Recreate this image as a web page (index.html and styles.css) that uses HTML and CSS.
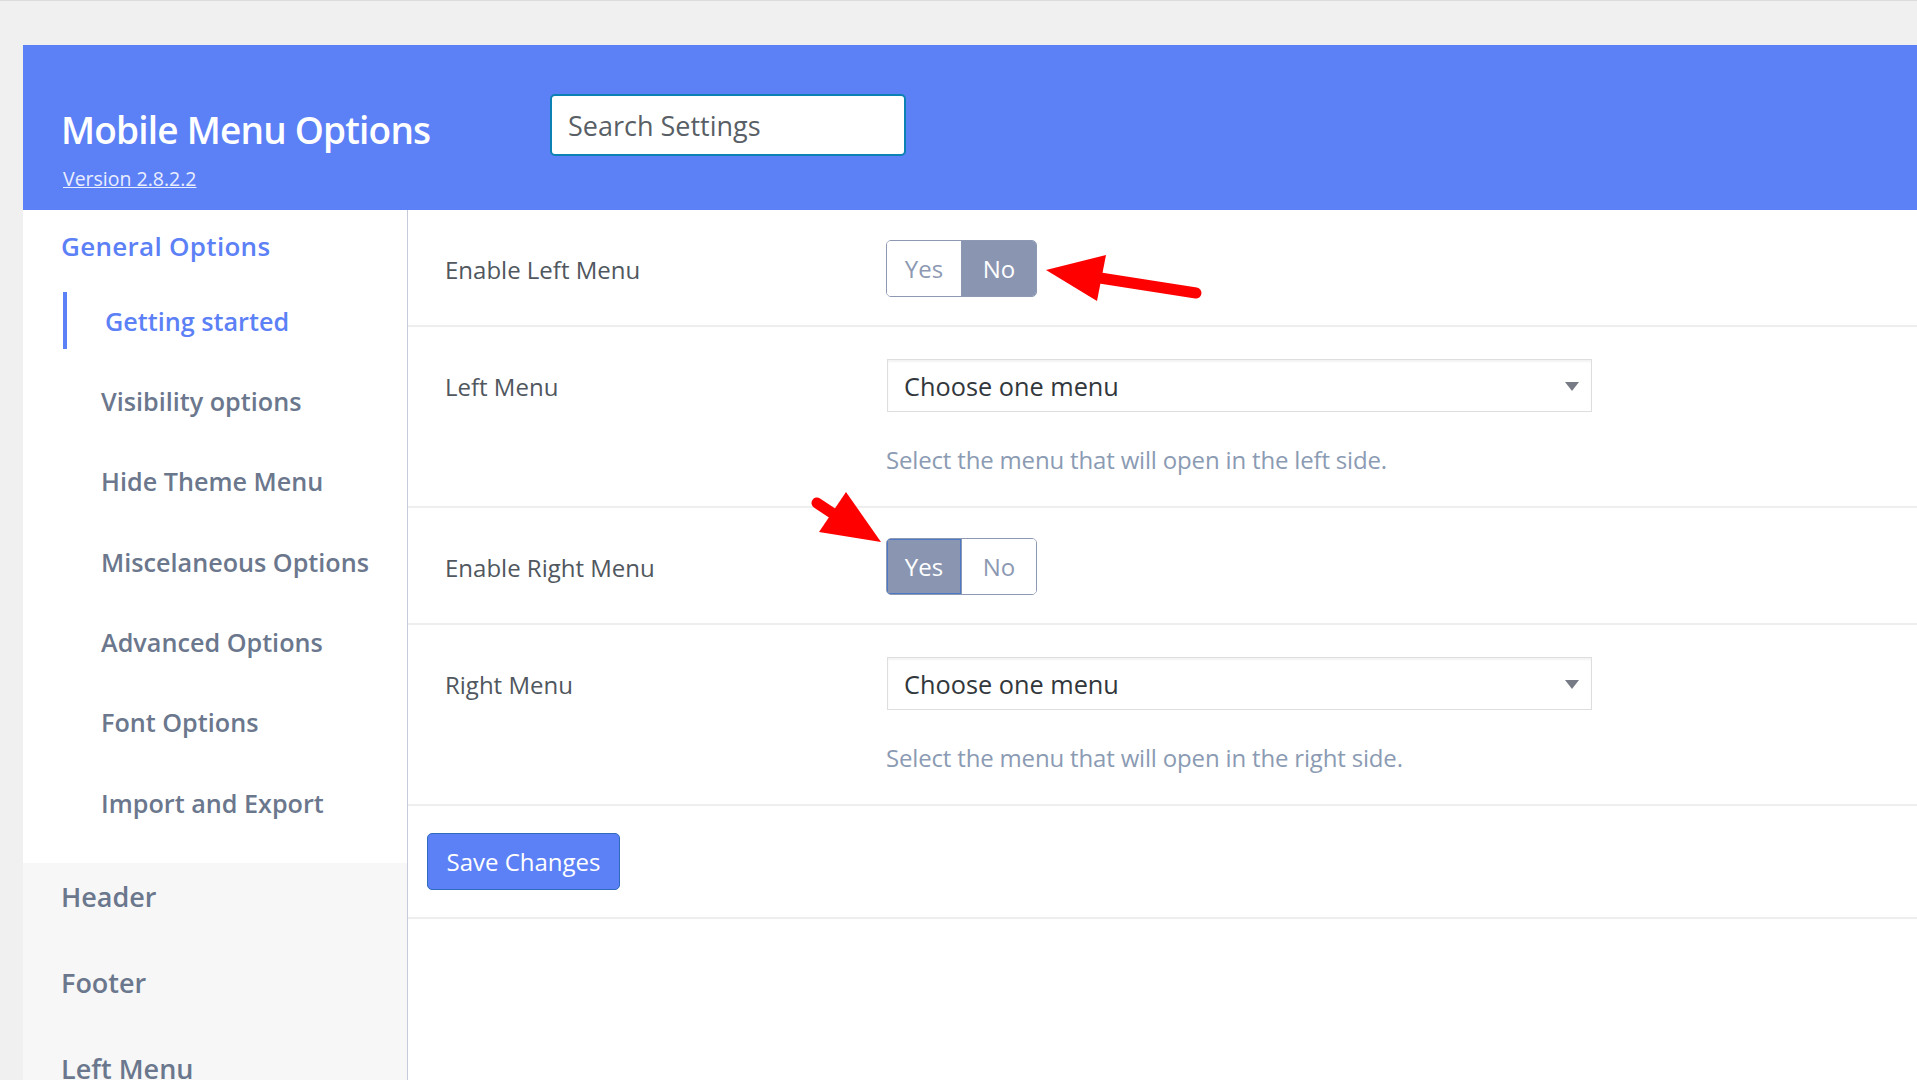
FILE: index.html
```html
<!DOCTYPE html>
<html lang="en">

<head>
    <meta charset="UTF-8">
    <meta name="viewport" content="width=device-width, initial-scale=1.0">
    <title>Mobile Menu Options</title>
    <link rel="stylesheet" href="styles.css">
</head>

<body>
    <div class="page">
        <header class="top-bar">
            <div class="brand">
                <h1>Mobile Menu Options</h1>
                <a href="#">Version 2.8.2.2</a>
            </div>
            <input class="search" type="text" placeholder="Search Settings">
        </header>

        <div class="content">
            <aside class="sidebar">
                <div class="side-top">
                    <div class="side-title">General Options</div>
                    <ul class="side-list">
                        <li class="active">Getting started</li>
                        <li>Visibility options</li>
                        <li>Hide Theme Menu</li>
                        <li>Miscelaneous Options</li>
                        <li>Advanced Options</li>
                        <li>Font Options</li>
                        <li>Import and Export</li>
                    </ul>
                </div>
                <div class="side-groups">
                    <div>Header</div>
                    <div>Footer</div>
                    <div>Left Menu</div>
                </div>
            </aside>

            <main class="settings">
                <div class="row row-toggle">
                    <div class="label">Enable Left Menu</div>
                    <div class="toggle">
                        <span>Yes</span>
                        <span class="on">No</span>
                    </div>
                </div>

                <div class="row row-select">
                    <div class="label label-select">Left Menu</div>
                    <div>
                        <div class="select">Choose one menu</div>
                        <div class="help">Select the menu that will open in the left side.</div>
                    </div>
                </div>

                <div class="row row-toggle">
                    <div class="label">Enable Right Menu</div>
                    <div class="toggle">
                        <span class="on focus">Yes</span>
                        <span>No</span>
                    </div>
                </div>

                <div class="row row-select">
                    <div class="label label-select">Right Menu</div>
                    <div>
                        <div class="select">Choose one menu</div>
                        <div class="help">Select the menu that will open in the right side.</div>
                    </div>
                </div>

                <div class="save-row">
                    <button class="save-btn">Save Changes</button>
                </div>
            </main>
        </div>
    </div>

    <!-- red annotation arrows -->
    <svg class="marks" width="1917" height="1080" viewBox="0 0 1917 1080">
        <line x1="1100" y1="278" x2="1196" y2="293" stroke="#ff0000" stroke-width="11" stroke-linecap="round" />
        <polygon points="1046,270 1106,255 1097,301" fill="#ff0000" />
        <line x1="817" y1="503" x2="838" y2="517" stroke="#ff0000" stroke-width="11" stroke-linecap="round" />
        <polygon points="881,542 846,492 819,532" fill="#ff0000" />
    </svg>
</body>

</html>
```

FILE: styles.css
```css
* {
    box-sizing: border-box;
}

body {
    margin: 0;
    background-color: #f0f0f1;
    border-top: 1px solid #dcdcdc;
    font-family: "Open Sans", "Noto Sans", sans-serif;
}

.page {
    margin: 44px 0 0 23px;
    min-height: 1035px;
    display: flex;
    flex-direction: column;
    background-color: #fff;
}

/* blue top bar */
.top-bar {
    height: 165px;
    background-color: #5c80f6;
    display: flex;
    align-items: flex-start;
    padding-left: 38px;
}

.brand {
    width: 489px;
    padding-top: 63px;
}

.brand h1 {
    margin: 0;
    font-size: 37px;
    line-height: 44px;
    font-weight: 600;
    color: #fff;
    letter-spacing: -0.8px;
}

.brand a {
    display: inline-block;
    margin: 15px 0 0 2px;
    font-size: 19.5px;
    line-height: 24px;
    color: #e9eeff;
}

.search {
    margin-top: 49px;
    width: 356px;
    height: 62px;
    border: 2px solid #0b82b3;
    border-radius: 5px;
    background-color: #fff;
    padding: 0 16px;
    font-family: inherit;
    font-size: 27px;
    color: #555c64;
    outline: none;
}

.search::placeholder {
    color: #595f66;
}

.content {
    flex: 1;
    display: flex;
}

/* left menu */
.sidebar {
    width: 385px;
    border-right: 1px solid #c6cbdb;
    background-color: #f7f7f7;
    display: flex;
    flex-direction: column;
}

.side-top {
    background-color: #fff;
    padding: 8px 0 32px 38px;
}

.side-title {
    font-size: 26px;
    line-height: 57px;
    font-weight: 600;
    color: #5c80f6;
    letter-spacing: 0.3px;
}

.side-list {
    list-style: none;
    margin: 17px 0 0 2px;
    padding: 0;
}

.side-list li {
    height: 57px;
    display: flex;
    align-items: center;
    padding-left: 38px;
    margin-bottom: 23.4px;
    font-size: 25.2px;
    font-weight: 600;
    color: #6b778d;
}

.side-list li:last-child {
    margin-bottom: 0;
}

.side-list li.active {
    border-left: 4px solid #5c80f6;
    color: #5c80f6;
}

.side-groups {
    padding: 6px 0 0 38px;
}

.side-groups div {
    height: 56px;
    line-height: 56px;
    margin-bottom: 30px;
    font-size: 27px;
    font-weight: 600;
    color: #6b778d;
}

/* settings */
.settings {
    flex: 1;
    background-color: #fff;
}

.row {
    display: grid;
    grid-template-columns: 441px 1fr;
    align-items: start;
    padding-left: 37px;
    border-bottom: 2px solid #eeeeee;
}

.row-toggle {
    padding-top: 30px;
    padding-bottom: 28px;
}

.row-select {
    padding-top: 32px;
    padding-bottom: 30px;
}

.label {
    height: 57px;
    font-size: 24px;
    line-height: 59px;
    color: #50575e;
}

.label-select {
    height: 53px;
    line-height: 56px;
}

.toggle {
    display: flex;
    width: 151px;
    height: 57px;
    border: 1px solid #8d99b3;
    border-radius: 5px;
    overflow: hidden;
}

.toggle span {
    flex: 1;
    display: flex;
    align-items: center;
    justify-content: center;
    font-size: 24px;
    color: #8d99b3;
    background-color: #fff;
}

.toggle span + span {
    border-left: 1px solid #8d99b3;
}

.toggle span.on {
    background-color: #8a96b1;
    color: #fff;
}

.toggle span.focus {
    box-shadow: inset 0 0 0 1px #4d79c4;
}

.select {
    position: relative;
    margin-left: 1px;
    width: 705px;
    height: 53px;
    border: 1px solid #dedede;
    box-shadow: inset 0 2px 2px rgba(0, 0, 0, 0.05);
    padding-left: 16px;
    display: flex;
    align-items: center;
    font-size: 25.3px;
    color: #32373c;
}

.select::after {
    content: "";
    position: absolute;
    right: 12px;
    top: 22px;
    border-left: 7px solid transparent;
    border-right: 7px solid transparent;
    border-top: 9px solid #777b85;
}

.help {
    margin-top: 32px;
    font-size: 24px;
    line-height: 32px;
    letter-spacing: -0.17px;
    color: #8b9bb3;
}

.save-row {
    padding: 27px 0 27px 19px;
    border-bottom: 2px solid #eeeeee;
}

.save-btn {
    width: 193px;
    height: 57px;
    background-color: #5c80f6;
    border: 1px solid #2f6bbd;
    border-radius: 5px;
    color: #fff;
    font-family: inherit;
    font-size: 24px;
    cursor: pointer;
}

.marks {
    position: absolute;
    top: 0;
    left: 0;
    pointer-events: none;
}
```
